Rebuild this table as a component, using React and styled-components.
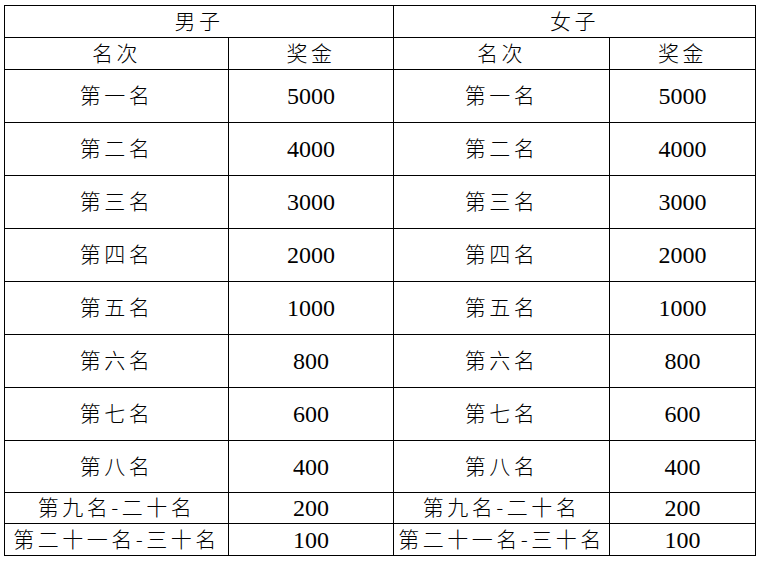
import styled, { createGlobalStyle } from "styled-components";

const GlobalStyle = createGlobalStyle`
  html, body {
    margin: 0;
    padding: 0;
    background: #fff;
  }
`;

const Page = styled.div`
  padding: 5px 0 0 4px;
`;

const Table = styled.table`
  border-collapse: collapse;
  table-layout: fixed;
  width: 751px;
  color: #000;
`;

const Cell = styled.td`
  border: 1px solid #000;
  padding: 0 0 ${(p) => (p.$num ? 0 : 3)}px;
  text-align: center;
  vertical-align: middle;
  height: ${(p) => (p.$num ? p.$h : p.$h - 3)}px;
  font-family: ${(p) =>
    p.$num
      ? '"Liberation Serif", "Times New Roman", serif'
      : '"Noto Sans CJK SC", "Liberation Serif", sans-serif'};
  font-size: ${(p) => (p.$num ? "24px" : "21px")};
  font-weight: ${(p) => (p.$num ? 400 : 300)};
  letter-spacing: ${(p) => (p.$num ? "0" : "3.5px")};
  white-space: nowrap;
  line-height: 1;
`;

const prizes = [
  ["第一名", "5000", 52],
  ["第二名", "4000", 52],
  ["第三名", "3000", 52],
  ["第四名", "2000", 52],
  ["第五名", "1000", 52],
  ["第六名", "800", 52],
  ["第七名", "600", 52],
  ["第八名", "400", 51],
  ["第九名-二十名", "200", 30],
  ["第二十一名-三十名", "100", 31],
];

export default function App() {
  return (
    <>
      <GlobalStyle />
      <Page>
        <Table>
          <colgroup>
            <col style={{ width: 224 }} />
            <col style={{ width: 165 }} />
            <col style={{ width: 216 }} />
            <col style={{ width: 146 }} />
          </colgroup>
          <tbody>
            <tr>
              <Cell colSpan={2} $h={31}>男子</Cell>
              <Cell colSpan={2} $h={31}>女子</Cell>
            </tr>
            <tr>
              <Cell $h={31}>名次</Cell>
              <Cell $h={31}>奖金</Cell>
              <Cell $h={31}>名次</Cell>
              <Cell $h={31}>奖金</Cell>
            </tr>
            {prizes.map(([rank, amount, h]) => (
              <tr key={rank}>
                <Cell $h={h}>{rank}</Cell>
                <Cell $h={h} $num>{amount}</Cell>
                <Cell $h={h}>{rank}</Cell>
                <Cell $h={h} $num>{amount}</Cell>
              </tr>
            ))}
          </tbody>
        </Table>
      </Page>
    </>
  );
}
